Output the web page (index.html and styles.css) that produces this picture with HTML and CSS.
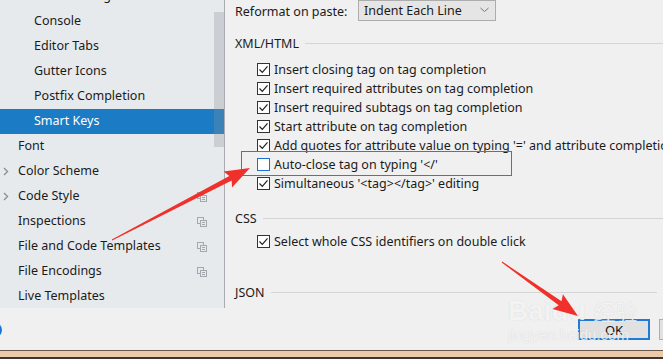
FILE: index.html
```html
<!DOCTYPE html>
<html lang="en">
<head>
  <meta charset="UTF-8">
  <title>Settings - Smart Keys</title>
  <link rel="stylesheet" href="styles.css">
</head>
<body>

  <div class="dialog">
    <div class="main">
      <div class="sidebar">
        <div class="tree">
          <div class="item sub">Code Folding</div>
          <div class="item sub">Console</div>
          <div class="item sub">Editor Tabs</div>
          <div class="item sub">Gutter Icons</div>
          <div class="item sub">Postfix Completion</div>
          <div class="item sub selected">Smart Keys</div>
          <div class="item"><span class="twisty"></span>Font</div>
          <div class="item"><span class="twisty"><svg width="6" height="9" viewBox="0 0 6 9"><path d="M1 1l3.5 3.5L1 8" fill="none" stroke="#8c8f93" stroke-width="1.4"/></svg></span>Color Scheme</div>
          <div class="item"><span class="twisty"><svg width="6" height="9" viewBox="0 0 6 9"><path d="M1 1l3.5 3.5L1 8" fill="none" stroke="#8c8f93" stroke-width="1.4"/></svg></span>Code Style<span class="copy"><svg width="10" height="10" viewBox="0 0 10 10"><rect x="0.5" y="0.5" width="6" height="6" fill="none" stroke="#a3a8ae"/><rect x="3.5" y="3.5" width="6" height="6" fill="#e7eaed" stroke="#a3a8ae"/><path d="M5 5.5h3M5 7.5h3" stroke="#a3a8ae"/></svg></span></div>
          <div class="item"><span class="twisty"></span>Inspections<span class="copy"><svg width="10" height="10" viewBox="0 0 10 10"><rect x="0.5" y="0.5" width="6" height="6" fill="none" stroke="#a3a8ae"/><rect x="3.5" y="3.5" width="6" height="6" fill="#e7eaed" stroke="#a3a8ae"/><path d="M5 5.5h3M5 7.5h3" stroke="#a3a8ae"/></svg></span></div>
          <div class="item"><span class="twisty"></span>File and Code Templates<span class="copy"><svg width="10" height="10" viewBox="0 0 10 10"><rect x="0.5" y="0.5" width="6" height="6" fill="none" stroke="#a3a8ae"/><rect x="3.5" y="3.5" width="6" height="6" fill="#e7eaed" stroke="#a3a8ae"/><path d="M5 5.5h3M5 7.5h3" stroke="#a3a8ae"/></svg></span></div>
          <div class="item"><span class="twisty"></span>File Encodings<span class="copy"><svg width="10" height="10" viewBox="0 0 10 10"><rect x="0.5" y="0.5" width="6" height="6" fill="none" stroke="#a3a8ae"/><rect x="3.5" y="3.5" width="6" height="6" fill="#e7eaed" stroke="#a3a8ae"/><path d="M5 5.5h3M5 7.5h3" stroke="#a3a8ae"/></svg></span></div>
          <div class="item"><span class="twisty"></span>Live Templates</div>
        </div>
        <div class="scrollbar"></div>
      </div>

      <div class="panel">
        <div class="paste-row">
          <span class="paste-label">Reformat on paste:</span>
          <div class="select">Indent Each Line
            <svg width="9" height="6" viewBox="0 0 9 6"><path d="M0.5 1l4 3.5 4-3.5" fill="none" stroke="#777"/></svg>
          </div>
        </div>

        <div class="group-title">XML/HTML</div>
        <div class="checks">
          <div class="check"><span class="box on"></span>Insert closing tag on tag completion</div>
          <div class="check"><span class="box on"></span>Insert required attributes on tag completion</div>
          <div class="check"><span class="box on"></span>Insert required subtags on tag completion</div>
          <div class="check"><span class="box on"></span>Start attribute on tag completion</div>
          <div class="check"><span class="box on"></span>Add quotes for attribute value on typing '=' and attribute completion</div>
          <div class="check"><span class="box focus"></span>Auto-close tag on typing '&lt;/'</div>
          <div class="check"><span class="box on"></span>Simultaneous '&lt;tag&gt;&lt;/tag&gt;' editing</div>
        </div>

        <div class="group-title css-title">CSS</div>
        <div class="checks css-checks">
          <div class="check"><span class="box on"></span>Select whole CSS identifiers on double click</div>
        </div>

        <div class="group-title json-title">JSON</div>
      </div>
    </div>

    <div class="footer">
      <span class="help"></span>
      <div class="buttons">
        <button class="btn default">OK</button>
        <button class="btn">Cancel</button>
      </div>
    </div>
    <div class="taskbar"></div>
  </div>

  <!-- annotation overlay from the screenshot -->
  <div class="highlight"></div>
  <div class="watermark">
    <div class="wm-big">Baidu <span class="wm-cn">经验</span></div>
    <div class="wm-small">jingyan.baidu.com</div>
  </div>
  <svg class="arrows" width="663" height="359" viewBox="0 0 663 359">
    <polygon points="111.8,239.6 229.3,176 223.6,171.6 250,168 232,187.6 231.7,180.4 112.2,240.4" fill="#f0302a"/>
    <polygon points="502.3,261.6 561.5,301.3 562.9,294.3 578,316 552.5,308.9 558.7,305.3 501.7,262.4" fill="#f0302a"/>
  </svg>

</body>
</html>
```

FILE: styles.css
```css
body {
  margin: 0;
  width: 663px;
  height: 359px;
  overflow: hidden;
  position: relative;
  font-family: "Noto Sans", "Liberation Sans", sans-serif;
  font-size: 12.5px;
  color: #1b1b1b;
  background: #f0f0f0;
}
.dialog { display: flex; flex-direction: column; height: 359px; }
.main { display: flex; height: 308px; }

.sidebar { position: relative; width: 224px; flex: none; background: #e7eaed; border-right: 1px solid #a9adb2; overflow: hidden; }
.tree { margin-top: -16px; }
.item { display: flex; align-items: center; height: 25px; box-sizing: border-box; padding-bottom: 2px; white-space: nowrap; }
.item.sub { padding-left: 34px; }
.item.selected { background: #1b7bc4; color: #fff; }
.twisty { width: 18px; flex: none; display: flex; align-items: center; padding: 2px 0 0 3px; box-sizing: border-box; }
.copy { margin-left: auto; margin-right: 17px; margin-top: 2px; display: flex; }
.scrollbar { position: absolute; left: 214px; top: 12px; width: 10px; height: 135px; background: rgba(140, 146, 156, 0.3); }

.panel { flex: 1; padding-left: 10px; white-space: nowrap; overflow: hidden; }
.paste-row { display: flex; align-items: center; height: 22px; }
.paste-label { width: 123px; }
.select { display: flex; align-items: center; justify-content: space-between; width: 138px; height: 21px; box-sizing: border-box; padding: 0 6px 0 5px; margin-top: -2px; background: #e5e5e5; border: 1px solid #adadad; }

.group-title { display: flex; align-items: center; height: 18px; margin-top: 12px; }
.group-title::after { content: ""; flex: 1; height: 1px; background: #d5d5d5; margin-left: 6px; }
.css-title { margin-top: 16px; }
.json-title { margin-top: 32px; margin-right: 6px; }

.checks { margin-top: 8px; padding-left: 22px; }
.css-checks { margin-top: 5px; }
.check { display: flex; align-items: center; height: 19px; }
.box { width: 13px; height: 13px; box-sizing: border-box; border: 1px solid #333; background: #fff; margin-right: 4px; flex: none; }
.box.on { background: #fff url("data:image/svg+xml,%3Csvg xmlns='http://www.w3.org/2000/svg' width='11' height='11' viewBox='0 0 11 11'%3E%3Cpath d='M1.5 5.5l2.8 2.8 5.2-6' fill='none' stroke='%23222' stroke-width='1.2'/%3E%3C/svg%3E") center no-repeat; }
.box.focus { border-color: #1d6fd0; }

.footer { display: flex; align-items: center; justify-content: space-between; height: 42px; }
.help { width: 16px; height: 16px; border-radius: 50%; background: #1976d2; margin-left: -14px; margin-top: 2px; }
.buttons { display: flex; gap: 9px; margin-right: -68px; margin-top: 1px; }
.btn { width: 72px; height: 21px; padding: 0; font-family: inherit; font-size: 13px; color: #111; background: #e1e1e1; border: 1px solid #adadad; }
.btn.default { border: 2px solid #1f7ad8; }

.taskbar { height: 6px; background: #eccaa9; border-top: 1px solid #6a584c; border-bottom: 2px solid #3b3633; }

.highlight { position: absolute; left: 241px; top: 151px; width: 271px; height: 25px; box-sizing: border-box; border: 1px solid #ea3b3b; }
.arrows { position: absolute; left: 0; top: 0; }
.watermark { position: absolute; left: 508px; top: 294px; color: rgba(255, 255, 255, 0.75); text-shadow: 0 0 1px rgba(160, 160, 160, 0.45); }
.wm-big { font-family: "Liberation Sans", sans-serif; font-size: 28px; font-weight: bold; line-height: 32px; }
.wm-cn { font-family: "Noto Sans CJK SC", sans-serif; font-size: 22px; font-weight: normal; }
.wm-small { font-family: "Liberation Sans", sans-serif; font-size: 15px; line-height: 16px; }
```
